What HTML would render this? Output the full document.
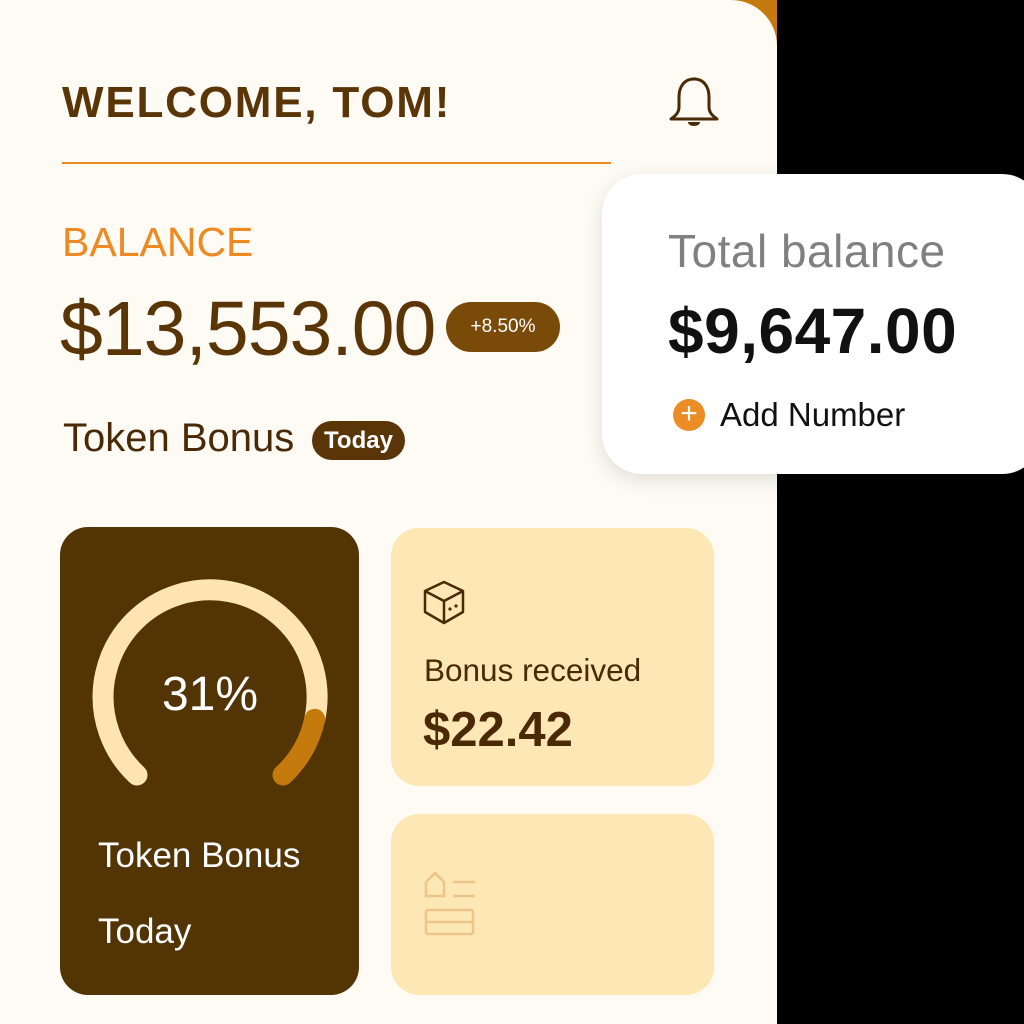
<!DOCTYPE html>
<html><head><meta charset="utf-8"><style>
*{margin:0;padding:0;box-sizing:border-box}
body{width:1024px;height:1024px;background:#000;position:relative;overflow:hidden;font-family:"Liberation Sans",sans-serif}
.orange{position:absolute;left:700px;top:0;width:77px;height:80px;background:#c47a0c}
.panel{position:absolute;left:0;top:0;width:777px;height:1024px;background:#fefbf5;border-top-right-radius:46px}
.t{position:absolute;white-space:nowrap}
.card{position:absolute;border-radius:28px}
</style></head><body>
<div class="orange"></div>
<div class="panel"></div>
<div class="t" style="left:62px;top:78px;font-size:44px;font-weight:bold;color:#5a3508;letter-spacing:1.8px">WELCOME, TOM!</div>
<svg style="position:absolute;left:664px;top:72px" width="60" height="60" viewBox="0 0 60 60"><path d="M28 7 h4 M30 7 c-10 0 -15 8 -15 18 v10 c0 6 -4 9 -8 12 h46 c-4 -3 -8 -6 -8 -12 v-10 c0 -10 -5 -18 -15 -18z" fill="none" stroke="#4a2a06" stroke-width="3" stroke-linejoin="round"/><path d="M24 50 h12 a6 4 0 0 1 -12 0z" fill="#4a2a06"/></svg>
<div style="position:absolute;left:62px;top:162px;width:549px;height:2px;background:#ee8a24"></div>
<div class="t" style="left:62px;top:219px;font-size:41px;color:#ee8a24">BALANCE</div>
<div class="t" style="left:60px;top:285px;font-size:77px;color:#5a3508;letter-spacing:-1px">$13,553.00</div>
<div style="position:absolute;left:446px;top:302px;width:114px;height:50px;border-radius:25px;background:#7a4a08;color:#fff;font-size:19px;text-align:center;line-height:50px">+8.50%</div>
<div class="t" style="left:63px;top:416px;font-size:40px;color:#4a2a06">Token Bonus</div>
<div style="position:absolute;left:312px;top:421px;width:93px;height:39px;border-radius:20px;background:#5a3508;color:#fff;font-size:24px;font-weight:bold;text-align:center;line-height:39px">Today</div>
<div class="card" style="left:60px;top:527px;width:299px;height:468px;background:#533405"></div>
<svg style="position:absolute;left:0;top:0" width="777" height="1024"><path d="M137,775 A107,107 0 1 1 314.7,719.3" fill="none" stroke="#fde4b2" stroke-width="21" stroke-linecap="round"/><path d="M314.7,719.3 A107,107 0 0 1 283,775" fill="none" stroke="#c47a0c" stroke-width="21" stroke-linecap="round"/></svg>
<div class="t" style="left:0;width:420px;text-align:center;top:667px;font-size:48px;color:#fff">31%</div>
<div class="t" style="left:98px;top:836px;font-size:35px;color:#fff">Token Bonus</div>
<div class="t" style="left:98px;top:912px;font-size:35px;color:#fff">Today</div>
<div class="card" style="left:391px;top:528px;width:323px;height:258px;background:#fde7b5"></div>
<svg style="position:absolute;left:420px;top:578px" width="48" height="50" viewBox="0 0 48 50"><path d="M24 4 L43 13 V34 L24 45 L5 34 V13 Z M5 13 L24 23 L43 13 M24 23 V45" fill="none" stroke="#4a2a06" stroke-width="2.5" stroke-linejoin="round"/><circle cx="30" cy="31" r="1.6" fill="#4a2a06"/><circle cx="36" cy="28" r="1.6" fill="#4a2a06"/></svg>
<div class="t" style="left:424px;top:652px;font-size:31.5px;color:#4a2a06">Bonus received</div>
<div class="t" style="left:423px;top:702px;font-size:49px;font-weight:bold;color:#4a2a06">$22.42</div>
<div class="card" style="left:391px;top:814px;width:323px;height:181px;background:#fde7b5"></div>
<svg style="position:absolute;left:420px;top:868px" width="60" height="72" viewBox="0 0 60 72"><g fill="none" stroke="#ecc587" stroke-width="2.5"><path d="M6 14 L15 5 L24 14 V28 H6 Z"/><path d="M33 14 H55 M33 28 H55"/><rect x="6" y="42" width="47" height="24" rx="2"/><path d="M6 54 H53"/></g></svg>
<div style="position:absolute;left:602px;top:174px;width:440px;height:300px;border-radius:40px;background:#fff;box-shadow:0 6px 20px rgba(0,0,0,0.12)"></div>
<div class="t" style="left:668px;top:224px;font-size:46px;color:#808080;letter-spacing:0.5px">Total balance</div>
<div class="t" style="left:668px;top:294px;font-size:64px;font-weight:bold;color:#111;letter-spacing:0.5px">$9,647.00</div>
<div style="position:absolute;left:673px;top:399px;width:32px;height:32px;border-radius:50%;background:#ec8c24;color:#fff;font-size:30px;line-height:30px;text-align:center">+</div>
<div class="t" style="left:720px;top:396px;font-size:33px;color:#111">Add Number</div>
</body></html>
